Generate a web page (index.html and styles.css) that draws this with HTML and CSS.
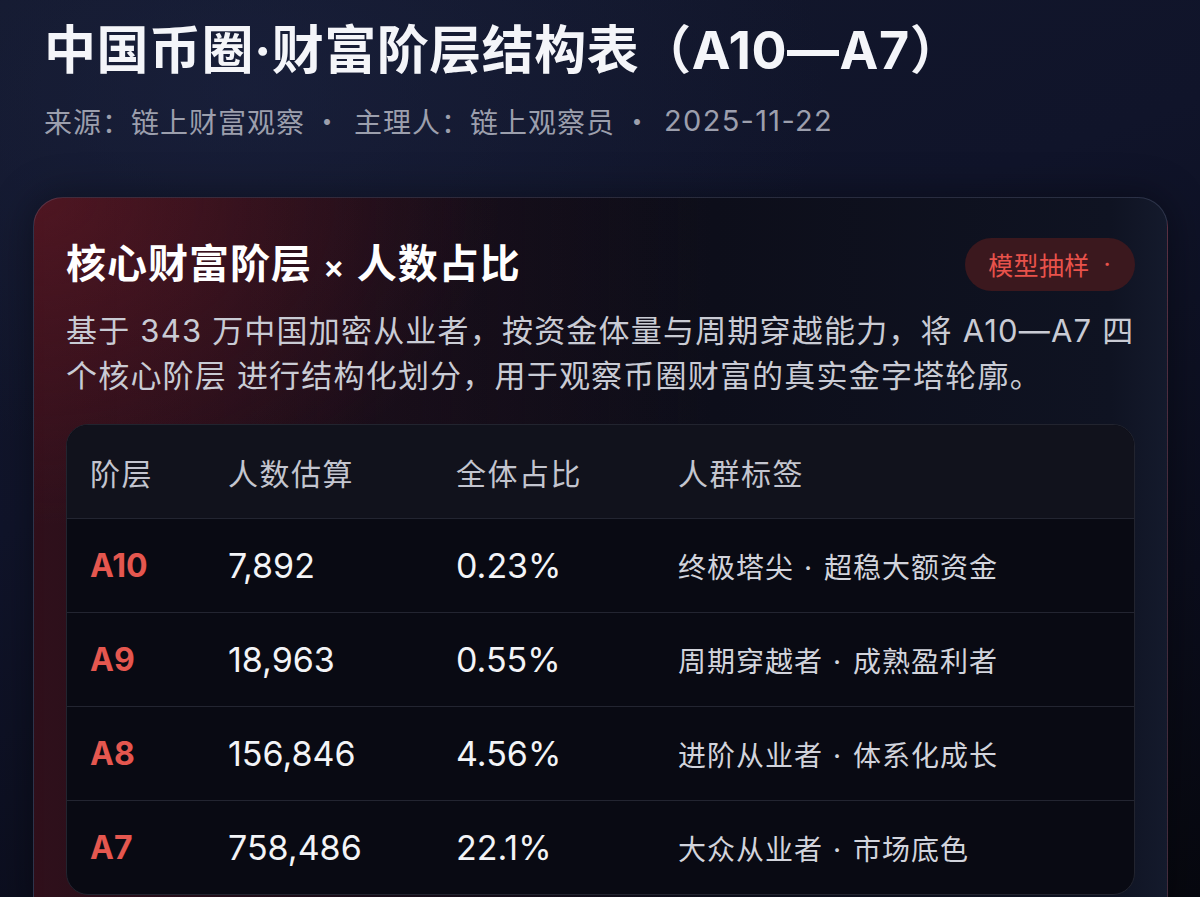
FILE: index.html
```html
<!DOCTYPE html>
<html lang="zh-CN">
<head>
<meta charset="utf-8">
<title>中国币圈·财富阶层结构表</title>
<link rel="stylesheet" href="styles.css">
</head>
<body>
<header class="page-head">
  <h1 class="page-title">中国币圈·财富阶层结构表（A10—A7）</h1>
  <p class="meta">
    <span>来源：链上财富观察</span>
    <span class="sep">·</span>
    <span>主理人：链上观察员</span>
    <span class="sep">·</span>
    <span class="date">2025-11-22</span>
  </p>
</header>

<section class="card">
  <div class="card-head">
    <h2 class="card-title">核心财富阶层 <span class="times">×</span> 人数占比</h2>
    <span class="badge">模型抽样<span class="badge-dot">·</span></span>
  </div>
  <p class="desc">基于 343 万中国加密从业者，按资金体量与周期穿越能力，将 A10—A7 四个核心阶层 进行结构化划分，用于观察币圈财富的真实金字塔轮廓。</p>

  <div class="table">
    <div class="row head">
      <span>阶层</span>
      <span>人数估算</span>
      <span>全体占比</span>
      <span>人群标签</span>
    </div>
    <div class="row">
      <span class="tier">A10</span>
      <span class="num">7,892</span>
      <span class="num">0.23%</span>
      <span class="tag">终极塔尖<span class="dot">·</span>超稳大额资金</span>
    </div>
    <div class="row">
      <span class="tier">A9</span>
      <span class="num">18,963</span>
      <span class="num">0.55%</span>
      <span class="tag">周期穿越者<span class="dot">·</span>成熟盈利者</span>
    </div>
    <div class="row">
      <span class="tier">A8</span>
      <span class="num">156,846</span>
      <span class="num">4.56%</span>
      <span class="tag">进阶从业者<span class="dot">·</span>体系化成长</span>
    </div>
    <div class="row">
      <span class="tier">A7</span>
      <span class="num">758,486</span>
      <span class="num">22.1%</span>
      <span class="tag">大众从业者<span class="dot">·</span>市场底色</span>
    </div>
  </div>
</section>
</body>
</html>
```

FILE: styles.css
```css
* {
  box-sizing: border-box;
}

html, body {
  margin: 0;
  padding: 0;
}

body {
  width: 1200px;
  height: 897px;
  overflow: hidden;
  font-family: Inter, "Noto Sans CJK SC", sans-serif;
  color: #f2f3f7;
  background:
    radial-gradient(ellipse 70% 60% at 20% 10%, rgba(30, 38, 70, 0.5), transparent 70%),
    linear-gradient(160deg, #13182c 0%, #10142a 40%, #0b0d1c 75%, #07080f 100%);
}

.page-head {
  padding: 20px 44px 0 44px;
}

.page-title {
  margin: 0;
  font-family: Inter, "Noto Sans CJK SC", sans-serif;
  font-size: 52px;
  line-height: 62px;
  font-weight: 700;
  color: #f4f5f9;
  letter-spacing: 0.5px;
}

.meta {
  margin: 19px 0 0 0;
  font-family: "Noto Sans CJK SC", sans-serif;
  font-size: 28px;
  line-height: 40px;
  color: #9c9fad;
  letter-spacing: 1px;
  display: flex;
}

.meta .sep {
  margin: 0 12px 0 8px;
}

.meta .date {
  font-family: Inter, sans-serif;
  font-size: 29px;
  letter-spacing: 1.3px;
}

.card {
  margin: 56px 32px 0 33px;
  border: 1px solid rgba(150, 160, 200, 0.2);
  border-radius: 30px;
  padding: 37px 32px 30px 32px;
  background:
    radial-gradient(ellipse 55% 60% at 0% 0%, rgba(110, 28, 40, 0.5), transparent 75%),
    linear-gradient(90deg, rgba(70, 18, 30, 0.55) 0%, rgba(40, 14, 26, 0.35) 30%, rgba(12, 13, 26, 0) 60%),
    linear-gradient(90deg, #140c17 0%, #0d0e1a 60%, #0f1322 95%, #141a2c 100%);
  box-shadow: 0 0 40px rgba(0, 0, 0, 0.4);
}

.card-head {
  display: flex;
  align-items: center;
  justify-content: space-between;
}

.card-title {
  margin: 0;
  font-family: "Noto Sans CJK SC", sans-serif;
  font-size: 40px;
  line-height: 53px;
  font-weight: 700;
  color: #ffffff;
  letter-spacing: 1px;
}

.card-title .times {
  font-family: Inter, sans-serif;
  font-size: 32px;
  font-weight: 600;
  margin: 0 1px;
}

.badge {
  display: inline-flex;
  align-items: center;
  height: 53px;
  padding: 0 24px 0 23px;
  border-radius: 27px;
  background: #3b181e;
  color: #e8524b;
  font-family: "Noto Sans CJK SC", sans-serif;
  font-size: 25px;
  letter-spacing: 0.3px;
}

.badge-dot {
  font-family: Inter, sans-serif;
  margin-left: 14px;
}

.desc {
  margin: 15px 0 0 0;
  font-family: Inter, "Noto Sans CJK SC", sans-serif;
  font-size: 31px;
  line-height: 45px;
  color: #c9cbd4;
  letter-spacing: 1.2px;
}

.table {
  margin-top: 26px;
  border: 1px solid #22242f;
  border-radius: 22px;
  overflow: hidden;
  background: #090a13;
}

.row {
  display: grid;
  grid-template-columns: 138px 228px 222px 1fr;
  align-items: center;
  height: 94px;
  padding-left: 23px;
  border-top: 1px solid #232531;
}

.row.head {
  height: 93px;
  border-top: none;
  background: #11121c;
  font-family: "Noto Sans CJK SC", sans-serif;
  font-size: 30px;
  color: #c3c5cf;
  letter-spacing: 1.5px;
}

.tier {
  font-family: Inter, sans-serif;
  font-size: 32px;
  font-weight: 700;
  color: #e5574f;
}

.num {
  font-family: Inter, sans-serif;
  font-size: 34px;
  font-weight: 400;
  color: #f3f4f7;
}

.tag {
  font-family: "Noto Sans CJK SC", sans-serif;
  font-size: 28px;
  color: #d2d4dc;
  letter-spacing: 1px;
}

.tag .dot {
  font-family: Inter, sans-serif;
  margin: 0 11px 0 10px;
}
```
